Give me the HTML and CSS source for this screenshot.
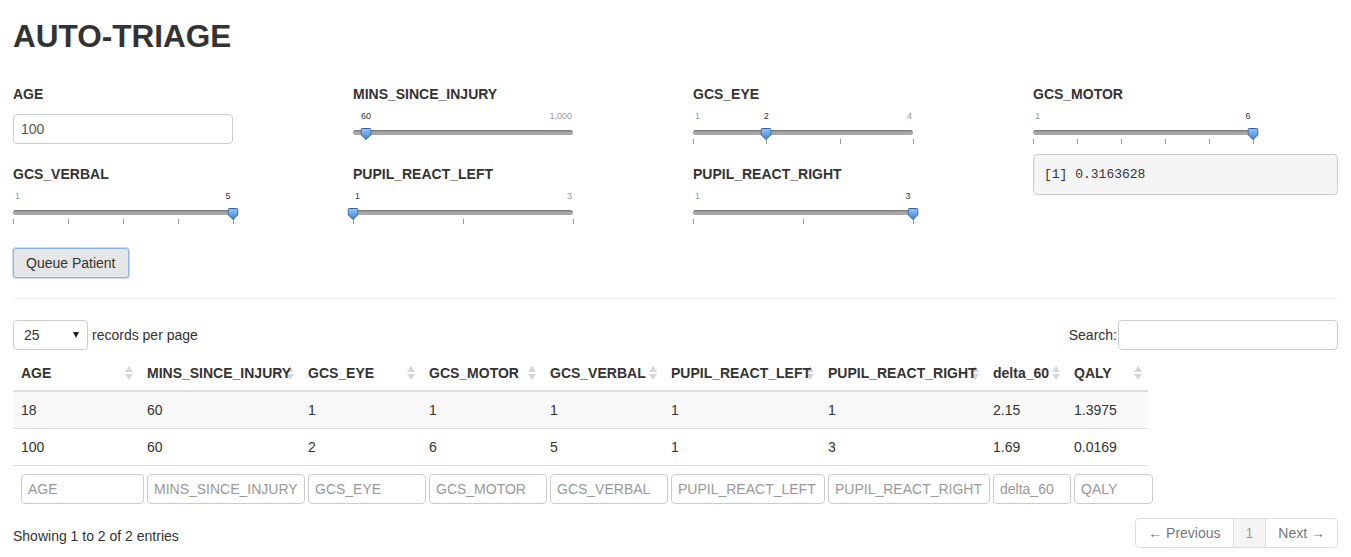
FILE: index.html
```html
<!DOCTYPE html>
<html>
<head>
<meta charset="utf-8">
<title>AUTO-TRIAGE</title>
<link rel="stylesheet" href="styles.css">
</head>
<body>
<svg class="defs" aria-hidden="true">
  <defs>
    <linearGradient id="hg" x1="0" y1="0" x2="0" y2="1">
      <stop offset="0" stop-color="#9cc5f0"/>
      <stop offset="0.45" stop-color="#6ea6e6"/>
      <stop offset="1" stop-color="#3f7fd2"/>
    </linearGradient>
  </defs>
</svg>
<div class="page">
  <h1 class="title">AUTO-TRIAGE</h1>

  <div class="inputs">
    <div class="group">
      <label class="lbl">AGE</label>
      <div class="num-input">100</div>
    </div>

    <div class="group">
      <label class="lbl">MINS_SINCE_INJURY</label>
      <div class="slider">
        <span class="irs-label irs-max">1,000</span>
        <span class="irs-label irs-from" style="left:13px">60</span>
        <div class="irs-line"></div>
        <span class="irs-handle" style="left:13.2px"><svg width="11" height="12" viewBox="0 0 11 12"><path d="M0.5 1.8Q0.5 0.5 1.8 0.5H9.2Q10.5 0.5 10.5 1.8V6.6L5.5 11.5L0.5 6.6Z" fill="url(#hg)" stroke="#2d5e9e"/></svg></span>
      </div>
    </div>

    <div class="group">
      <label class="lbl">GCS_EYE</label>
      <div class="slider">
        <span class="irs-label irs-min">1</span>
        <span class="irs-label irs-max">4</span>
        <span class="irs-label irs-from" style="left:73.3px">2</span>
        <div class="irs-line"></div>
        <span class="irs-tick" style="left:0px"></span>
        <span class="irs-tick" style="left:73.3px"></span>
        <span class="irs-tick" style="left:146.7px"></span>
        <span class="irs-tick" style="left:220px"></span>
        <span class="irs-handle" style="left:73.3px"><svg width="11" height="12" viewBox="0 0 11 12"><path d="M0.5 1.8Q0.5 0.5 1.8 0.5H9.2Q10.5 0.5 10.5 1.8V6.6L5.5 11.5L0.5 6.6Z" fill="url(#hg)" stroke="#2d5e9e"/></svg></span>
      </div>
    </div>

    <div class="group">
      <label class="lbl">GCS_MOTOR</label>
      <div class="slider">
        <span class="irs-label irs-min">1</span>
        <span class="irs-label irs-from" style="left:215px">6</span>
        <div class="irs-line"></div>
        <span class="irs-tick" style="left:0px"></span>
        <span class="irs-tick" style="left:44px"></span>
        <span class="irs-tick" style="left:88px"></span>
        <span class="irs-tick" style="left:132px"></span>
        <span class="irs-tick" style="left:176px"></span>
        <span class="irs-tick" style="left:220px"></span>
        <span class="irs-handle" style="left:220px"><svg width="11" height="12" viewBox="0 0 11 12"><path d="M0.5 1.8Q0.5 0.5 1.8 0.5H9.2Q10.5 0.5 10.5 1.8V6.6L5.5 11.5L0.5 6.6Z" fill="url(#hg)" stroke="#2d5e9e"/></svg></span>
      </div>
    </div>

    <div class="group">
      <label class="lbl">GCS_VERBAL</label>
      <div class="slider">
        <span class="irs-label irs-min">1</span>
        <span class="irs-label irs-from" style="left:215px">5</span>
        <div class="irs-line"></div>
        <span class="irs-tick" style="left:0px"></span>
        <span class="irs-tick" style="left:55px"></span>
        <span class="irs-tick" style="left:110px"></span>
        <span class="irs-tick" style="left:165px"></span>
        <span class="irs-tick" style="left:220px"></span>
        <span class="irs-handle" style="left:220px"><svg width="11" height="12" viewBox="0 0 11 12"><path d="M0.5 1.8Q0.5 0.5 1.8 0.5H9.2Q10.5 0.5 10.5 1.8V6.6L5.5 11.5L0.5 6.6Z" fill="url(#hg)" stroke="#2d5e9e"/></svg></span>
      </div>
    </div>

    <div class="group">
      <label class="lbl">PUPIL_REACT_LEFT</label>
      <div class="slider">
        <span class="irs-label irs-max">3</span>
        <span class="irs-label irs-from" style="left:4.5px">1</span>
        <div class="irs-line"></div>
        <span class="irs-tick" style="left:0px"></span>
        <span class="irs-tick" style="left:110px"></span>
        <span class="irs-tick" style="left:220px"></span>
        <span class="irs-handle" style="left:0px"><svg width="11" height="12" viewBox="0 0 11 12"><path d="M0.5 1.8Q0.5 0.5 1.8 0.5H9.2Q10.5 0.5 10.5 1.8V6.6L5.5 11.5L0.5 6.6Z" fill="url(#hg)" stroke="#2d5e9e"/></svg></span>
      </div>
    </div>

    <div class="group">
      <label class="lbl">PUPIL_REACT_RIGHT</label>
      <div class="slider">
        <span class="irs-label irs-min">1</span>
        <span class="irs-label irs-from" style="left:215px">3</span>
        <div class="irs-line"></div>
        <span class="irs-tick" style="left:0px"></span>
        <span class="irs-tick" style="left:110px"></span>
        <span class="irs-tick" style="left:220px"></span>
        <span class="irs-handle" style="left:220px"><svg width="11" height="12" viewBox="0 0 11 12"><path d="M0.5 1.8Q0.5 0.5 1.8 0.5H9.2Q10.5 0.5 10.5 1.8V6.6L5.5 11.5L0.5 6.6Z" fill="url(#hg)" stroke="#2d5e9e"/></svg></span>
      </div>
    </div>

    <pre class="output">[1] 0.3163628</pre>
  </div>

  <button class="btn" type="button">Queue Patient</button>

  <hr class="sep">

  <div class="dt-top">
    <div class="dt-length">
      <div class="select"><span>25</span><span class="caret"></span></div>
      <span>records per page</span>
    </div>
    <div class="dt-filter">
      <span>Search:</span>
      <div class="search-box"></div>
    </div>
  </div>

  <table class="dt">
    <colgroup>
      <col class="w-age"><col class="w-mins"><col class="w-eye"><col class="w-motor"><col class="w-verbal"><col class="w-pl"><col class="w-pr"><col class="w-delta"><col class="w-qaly">
    </colgroup>
    <thead>
      <tr>
        <th><span class="th-text">AGE</span><span class="sort"></span></th>
        <th><span class="th-text">MINS_SINCE_INJURY</span><span class="sort"></span></th>
        <th><span class="th-text">GCS_EYE</span><span class="sort"></span></th>
        <th><span class="th-text">GCS_MOTOR</span><span class="sort"></span></th>
        <th><span class="th-text">GCS_VERBAL</span><span class="sort"></span></th>
        <th><span class="th-text">PUPIL_REACT_LEFT</span><span class="sort"></span></th>
        <th><span class="th-text">PUPIL_REACT_RIGHT</span><span class="sort"></span></th>
        <th><span class="th-text">delta_60</span><span class="sort"></span></th>
        <th><span class="th-text">QALY</span><span class="sort"></span></th>
      </tr>
    </thead>
    <tbody>
      <tr class="odd">
        <td>18</td><td>60</td><td>1</td><td>1</td><td>1</td><td>1</td><td>1</td><td>2.15</td><td>1.3975</td>
      </tr>
      <tr>
        <td>100</td><td>60</td><td>2</td><td>6</td><td>5</td><td>1</td><td>3</td><td>1.69</td><td>0.0169</td>
      </tr>
    </tbody>
    <tfoot>
      <tr>
        <td><div class="filter">AGE</div></td>
        <td><div class="filter">MINS_SINCE_INJURY</div></td>
        <td><div class="filter">GCS_EYE</div></td>
        <td><div class="filter">GCS_MOTOR</div></td>
        <td><div class="filter">GCS_VERBAL</div></td>
        <td><div class="filter">PUPIL_REACT_LEFT</div></td>
        <td><div class="filter">PUPIL_REACT_RIGHT</div></td>
        <td><div class="filter">delta_60</div></td>
        <td><div class="filter">QALY</div></td>
      </tr>
    </tfoot>
  </table>

  <div class="dt-bottom">
    <div class="dt-info">Showing 1 to 2 of 2 entries</div>
    <ul class="pagination">
      <li class="pg">← Previous</li>
      <li class="pg pg-current">1</li>
      <li class="pg">Next →</li>
    </ul>
  </div>
</div>
</body>
</html>
```

FILE: styles.css
```css
* { box-sizing: border-box; }

html, body {
  margin: 0;
  background: #fff;
}

body {
  font-family: "Liberation Sans", Arial, sans-serif;
  font-size: 14px;
  line-height: 20px;
  color: #333;
}

.defs {
  position: absolute;
  width: 0;
  height: 0;
  overflow: hidden;
}

.page {
  padding: 0 13px;
}

.title {
  margin: 19px 0 21px;
  font-size: 31.5px;
  line-height: 34px;
  font-weight: bold;
  color: #333;
}

.inputs {
  display: grid;
  grid-template-columns: 340px 340px 340px 1fr;
  grid-auto-rows: 80px;
}

.group {
  padding-top: 10px;
}

.lbl {
  display: block;
  font-weight: bold;
  line-height: 20px;
}

.num-input {
  margin-top: 10px;
  width: 220px;
  height: 30px;
  border: 1px solid #ccc;
  border-radius: 4px;
  padding: 0 7px;
  line-height: 28px;
  color: #555;
}

/* slider */
.slider {
  position: relative;
  width: 220px;
  height: 50px;
}

.irs-label {
  position: absolute;
  top: 7px;
  font-size: 9px;
  line-height: 11px;
  white-space: nowrap;
}

.irs-min {
  left: 2px;
  color: #999;
}

.irs-max {
  right: 1px;
  color: #999;
}

.irs-from {
  color: #333;
  transform: translateX(-50%);
}

.irs-line {
  position: absolute;
  top: 26px;
  left: 0;
  right: 0;
  height: 5px;
  border-radius: 3px;
  background: linear-gradient(to bottom, #777 0%, #8f8f8f 25%, #acacac 55%, #a4a4a4 100%);
}

.irs-tick {
  position: absolute;
  top: 35px;
  width: 1px;
  height: 5px;
  background: #999;
}

.irs-handle {
  position: absolute;
  top: 24px;
  width: 11px;
  height: 12px;
  transform: translateX(-50%);
  display: block;
}

.irs-handle svg {
  display: block;
}

.output {
  margin: 0;
  align-self: start;
  height: 41px;
  padding: 10px 10px;
  border: 1px solid #ccc;
  border-radius: 4px;
  background: #f5f5f5;
  font-family: "Liberation Mono", "Courier New", monospace;
  font-size: 13px;
  line-height: 19px;
  color: #333;
}

.btn {
  display: block;
  margin-top: 14px;
  height: 30px;
  padding: 0 12px;
  font-family: inherit;
  font-size: 14px;
  line-height: 28px;
  color: #333;
  background: #e6e6e6;
  border: 1px solid #8db2e9;
  border-radius: 3px;
  box-shadow: 0 0 0 1px #c9dbf5;
}

.sep {
  margin: 20px 0 21px;
  border: 0;
  border-top: 1px solid #eee;
  height: 0;
}

/* datatable */
.dt-top {
  display: flex;
  justify-content: space-between;
  align-items: center;
  height: 30px;
}

.dt-length {
  display: flex;
  align-items: center;
  gap: 4px;
}

.select {
  display: flex;
  align-items: center;
  justify-content: space-between;
  width: 75px;
  height: 30px;
  border: 1px solid #ccc;
  border-radius: 4px;
  padding: 0 8px 0 10px;
  color: #333;
}

.caret {
  width: 0;
  height: 0;
  border-left: 3.5px solid transparent;
  border-right: 3.5px solid transparent;
  border-top: 6px solid #222;
}

.dt-filter {
  display: flex;
  align-items: center;
  gap: 1px;
}

.search-box {
  width: 220px;
  height: 30px;
  border: 1px solid #ccc;
  border-radius: 4px;
}

.dt {
  margin-top: 5px;
  width: 1135px;
  table-layout: fixed;
  border-collapse: collapse;
  border-spacing: 0;
}

.w-age { width: 126px; }
.w-mins { width: 161px; }
.w-eye { width: 121px; }
.w-motor { width: 121px; }
.w-verbal { width: 121px; }
.w-pl { width: 157px; }
.w-pr { width: 165px; }
.w-delta { width: 81px; }
.w-qaly { width: 82px; }

.dt th {
  position: relative;
  padding: 8px 8px 7px;
  text-align: left;
  font-weight: bold;
  white-space: nowrap;
  border-bottom: 2px solid #ddd;
  line-height: 20px;
}

.th-text {
  position: relative;
  z-index: 1;
}

.sort {
  position: absolute;
  right: 6px;
  top: 50%;
  width: 8px;
  height: 14px;
  margin-top: -7px;
}

.sort::before,
.sort::after {
  content: "";
  position: absolute;
  left: 0;
  width: 0;
  height: 0;
  border-left: 4px solid transparent;
  border-right: 4px solid transparent;
}

.sort::before {
  top: 0;
  border-bottom: 6px solid #d6d6d6;
}

.sort::after {
  bottom: 0;
  border-top: 6px solid #d6d6d6;
}

.dt td {
  padding: 8px;
  border-top: 1px solid #ddd;
  line-height: 20px;
  white-space: nowrap;
}

.dt tbody tr.odd td {
  background: #f9f9f9;
}

.dt tfoot td {
  padding: 8px 0 8px 8px;
}

.filter {
  width: calc(100% + 5px);
  height: 30px;
  border: 1px solid #ccc;
  border-radius: 4px;
  padding: 0 6px;
  line-height: 28px;
  color: #999;
  white-space: nowrap;
  overflow: hidden;
}

.dt-bottom {
  display: flex;
  justify-content: space-between;
  align-items: flex-start;
  margin-top: 6px;
}

.dt-info {
  padding-top: 8px;
}

.pagination {
  display: flex;
  margin: 0;
  padding: 0;
  list-style: none;
}

.pg {
  height: 30px;
  padding: 0 12px;
  line-height: 28px;
  border: 1px solid #ddd;
  margin-left: -1px;
  color: #777;
  background: #fff;
}

.pg:first-child {
  margin-left: 0;
  border-radius: 4px 0 0 4px;
}

.pg:last-child {
  border-radius: 0 4px 4px 0;
}

.pg-current {
  background: #f5f5f5;
  color: #999;
}
```
